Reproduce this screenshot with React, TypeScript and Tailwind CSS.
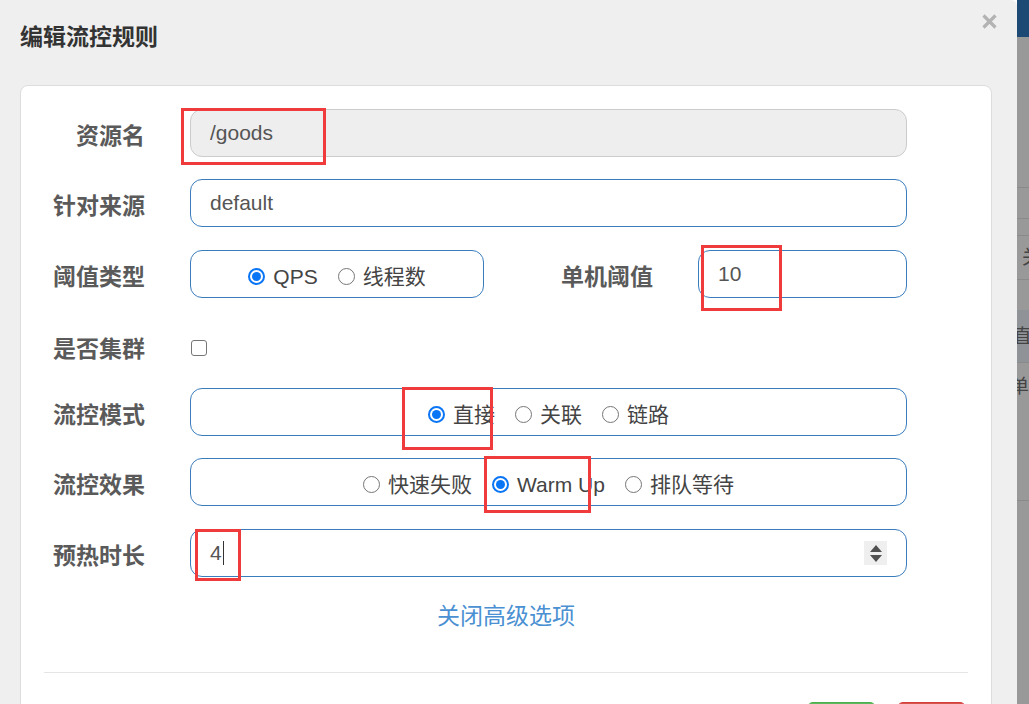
const font = "font-['Liberation_Sans','Noto_Sans_CJK_SC',sans-serif]";

const Label = ({ children }: { children: string }) => (
  <div className="w-[124px] shrink-0 pt-[7px] text-right text-[23px] leading-none font-bold text-[#5a5a5a]">
    {children}
  </div>
);

const Radio = ({ label, checked }: { label: string; checked?: boolean }) => (
  <label className="flex items-center gap-[8px]">
    {checked ? (
      <span className="w-[17px] h-[17px] rounded-full border-[2px] border-[#0a75f5] flex items-center justify-center">
        <span className="w-[9px] h-[9px] rounded-full bg-[#0a75f5]" />
      </span>
    ) : (
      <span className="w-[17px] h-[17px] rounded-full border-[1.5px] border-[#767676] bg-white" />
    )}
    <span className="text-[21px] leading-none text-[#444]">{label}</span>
  </label>
);

const RadioBox = ({ items, width }: { items: { label: string; checked?: boolean }[]; width?: string }) => (
  <div
    className={`${width ?? "flex-1"} h-[48px] pt-[4px] flex items-center justify-center gap-[20px] border border-[#3a7dbd] rounded-[12px]`}
  >
    {items.map((it) => (
      <Radio key={it.label} label={it.label} checked={it.checked} />
    ))}
  </div>
);

const Mark = ({ className }: { className: string }) => (
  <div className={`absolute border-[3px] border-[#ef3b3b] ${className}`} />
);

export default function App() {
  return (
    <div className={`relative w-[1029px] h-[704px] overflow-hidden flex ${font}`}>
      {/* modal */}
      <div className="w-[1017px] shrink-0 bg-[#efefef] rounded-tr-[6px] flex flex-col">
        <div className="h-[74px] shrink-0 flex justify-between pl-[20px] pr-[20px]">
          <h4 className="self-center text-[23px] leading-none font-bold text-[#333]">编辑流控规则</h4>
          <svg width="15" height="15" viewBox="0 0 15 15" className="mt-[14px]">
            <path d="M1.5 1.5 L13.5 13.5 M13.5 1.5 L1.5 13.5" stroke="#b3b3b3" strokeWidth="3.2" />
          </svg>
        </div>

        <div className="ml-[20px] mr-[25px] mt-[11px] shrink-0 bg-white border border-[#dddddd] rounded-t-[8px] flex flex-col pt-[23px]">
          <div className="flex items-center h-[48px]">
            <Label>资源名</Label>
            <div className="ml-[45px] w-[717px] h-[48px] flex items-center pl-[19px] bg-[#eeeeee] border border-[#cccccc] rounded-[12px] text-[21px] text-[#555]">
              /goods
            </div>
          </div>

          <div className="flex items-center h-[48px] mt-[22px]">
            <Label>针对来源</Label>
            <div className="ml-[45px] w-[717px] h-[48px] flex items-center pl-[19px] border border-[#3a7dbd] rounded-[12px] text-[21px] text-[#555]">
              default
            </div>
          </div>

          <div className="flex items-center h-[48px] mt-[23px]">
            <Label>阈值类型</Label>
            <div className="ml-[45px] w-[717px] flex items-center">
              <RadioBox width="w-[294px]" items={[{ label: "QPS", checked: true }, { label: "线程数" }]} />
              <div className="w-[169px] pt-[7px] text-right text-[23px] leading-none font-bold text-[#5a5a5a]">单机阈值</div>
              <div className="ml-[45px] flex-1 h-[48px] flex items-center pl-[19px] border border-[#3a7dbd] rounded-[12px] text-[21px] text-[#555]">
                10
              </div>
            </div>
          </div>

          <div className="flex items-center h-[48px] mt-[24px]">
            <Label>是否集群</Label>
            <div className="ml-[46px] pt-[4px] flex items-center">
              <span className="w-[16px] h-[16px] rounded-[3px] border-[1.5px] border-[#767676] bg-white" />
            </div>
          </div>

          <div className="flex items-center h-[48px] mt-[18px]">
            <Label>流控模式</Label>
            <div className="ml-[45px] w-[717px] flex">
              <RadioBox items={[{ label: "直接", checked: true }, { label: "关联" }, { label: "链路" }]} />
            </div>
          </div>

          <div className="flex items-center h-[48px] mt-[22px]">
            <Label>流控效果</Label>
            <div className="ml-[45px] w-[717px] flex">
              <RadioBox items={[{ label: "快速失败" }, { label: "Warm Up", checked: true }, { label: "排队等待" }]} />
            </div>
          </div>

          <div className="flex items-center h-[48px] mt-[23px]">
            <Label>预热时长</Label>
            <div className="ml-[45px] w-[717px] h-[48px] flex items-center pl-[19px] pr-[19px] border border-[#3a7dbd] rounded-[12px] text-[21px] text-[#555]">
              <span>4</span>
              <span className="ml-[1px] w-[1px] h-[24px] bg-[#333]" />
              <div className="ml-auto w-[23px] h-[24px] bg-[#efefef] flex flex-col items-center justify-center gap-[3px]">
                <svg width="12" height="7" viewBox="0 0 12 7"><path d="M6 0 L12 7 L0 7 Z" fill="#505050" /></svg>
                <svg width="12" height="7" viewBox="0 0 12 7"><path d="M0 0 L12 0 L6 7 Z" fill="#505050" /></svg>
              </div>
            </div>
          </div>

          <div className="mt-[23px] h-[30px] pt-[2px] flex items-center justify-center text-[23px] leading-none text-[#4a90d2]">
            关闭高级选项
          </div>

          <div className="mt-[42px] mx-[23px] border-t border-[#e5e5e5]" />

          <div className="mt-[29px] mr-[25px] flex justify-end gap-[21px]">
            <div className="w-[69px] h-[46px] rounded-[6px] bg-[#5cb85c] border border-[#4cae4c]" />
            <div className="w-[69px] h-[46px] rounded-[6px] bg-[#d9534f] border border-[#d43f3a]" />
          </div>
        </div>
      </div>

      {/* dimmed page behind */}
      <div className="flex-1 overflow-hidden flex flex-col bg-[#999999] text-[19px] leading-none text-[#444]">
        <div className="h-[37px] shrink-0 bg-[#1d4a74]" />
        <div className="h-[150px] shrink-0" />
        <div className="h-[31px] shrink-0 border-t border-[#8a8a8a]" />
        <div className="h-[17px] shrink-0 border-t border-[#8a8a8a]" />
        <div className="h-[44px] shrink-0 border-t border-[#8a8a8a] flex items-center pl-[5px] whitespace-nowrap">关</div>
        <div className="h-[31px] shrink-0 border-t border-[#8a8a8a]" />
        <div className="h-[52px] shrink-0 bg-[#8f9296] flex items-center -ml-[4px] whitespace-nowrap">直接</div>
        <div className="h-[138px] shrink-0 border-t border-[#8a8a8a] pt-[14px] -ml-[7px] whitespace-nowrap">单机</div>
        <div className="flex-1 border-t border-[#8a8a8a]" />
      </div>

      {/* annotation boxes */}
      <Mark className="left-[181px] top-[108px] w-[145px] h-[57px]" />
      <Mark className="left-[701px] top-[245px] w-[81px] h-[66px]" />
      <Mark className="left-[402px] top-[387px] w-[91px] h-[63px]" />
      <Mark className="left-[484px] top-[456px] w-[107px] h-[57px]" />
      <Mark className="left-[195px] top-[529px] w-[46px] h-[52px]" />
    </div>
  );
}
